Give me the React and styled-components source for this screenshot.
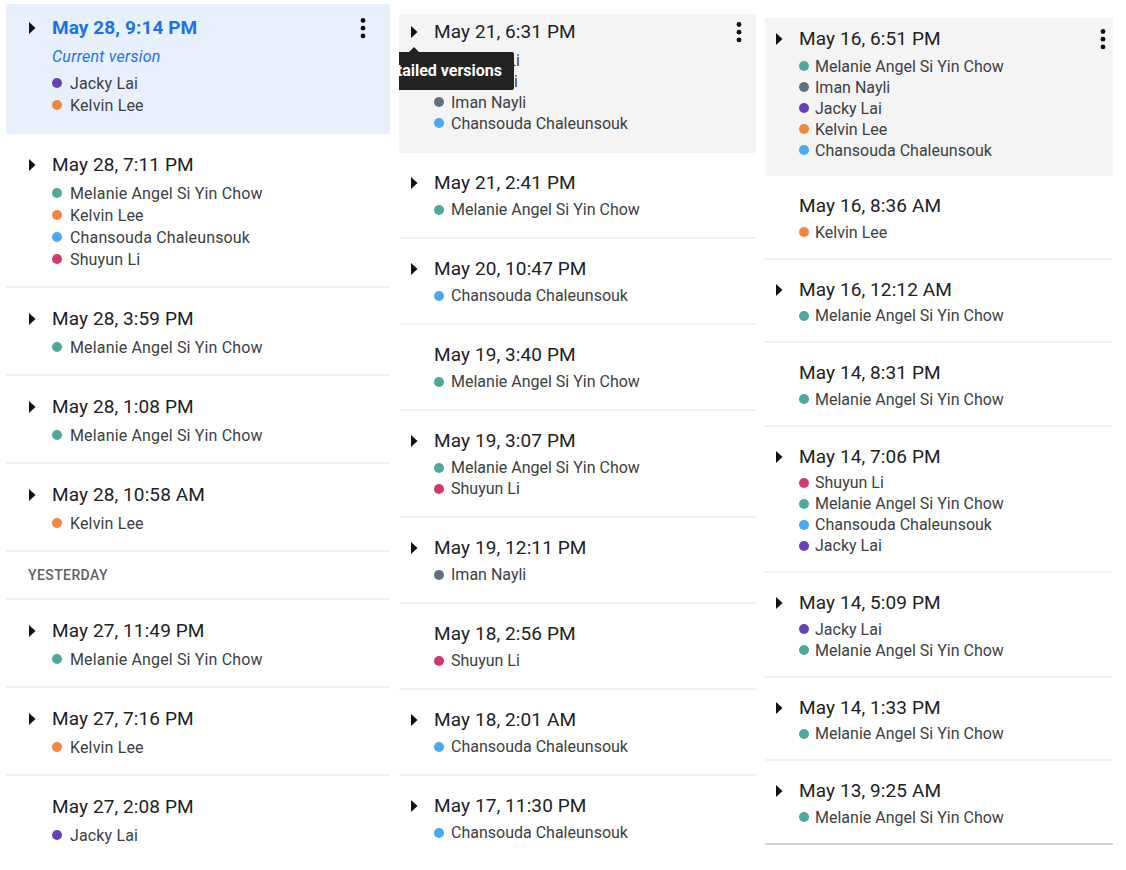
import React from "react";
import styled, { createGlobalStyle } from "styled-components";

const GlobalStyle = createGlobalStyle`
  html, body {
    margin: 0;
    padding: 0;
    background: #ffffff;
  }
  body {
    font-family: Roboto, "Liberation Sans", Arial, sans-serif;
    -webkit-font-smoothing: antialiased;
  }
`;

const COLORS = {
  teal: "#4fa89c",
  slate: "#5f7080",
  purple: "#6741b8",
  orange: "#ef873c",
  blue: "#4aa8f0",
  pink: "#d3386a",
};

const PEOPLE = {
  melanie: ["Melanie Angel Si Yin Chow", COLORS.teal],
  iman: ["Iman Nayli", COLORS.slate],
  jacky: ["Jacky Lai", COLORS.purple],
  kelvin: ["Kelvin Lee", COLORS.orange],
  chan: ["Chansouda Chaleunsouk", COLORS.blue],
  shuyun: ["Shuyun Li", COLORS.pink],
};

/* spacing differs a little from one column to the next */
const columns = [
  {
    top: 4,
    width: 384,
    padLeft: 14,
    padRight: 19,
    line: 22,
    tracking: 0.15,
    dotGap: 8,
    normal: { top: 19, gap: 5, bottom: 16 },
    selected: { top: 12, gap: 5, bottom: 16 },
    items: [
      { time: "May 28, 9:14 PM", people: ["jacky", "kelvin"], current: true, kind: "current" },
      { time: "May 28, 7:11 PM", people: ["melanie", "kelvin", "chan", "shuyun"] },
      { time: "May 28, 3:59 PM", people: ["melanie"] },
      { time: "May 28, 1:08 PM", people: ["melanie"] },
      { time: "May 28, 10:58 AM", people: ["kelvin"] },
      { header: "Yesterday" },
      { time: "May 27, 11:49 PM", people: ["melanie"] },
      { time: "May 27, 7:16 PM", people: ["kelvin"] },
      { time: "May 27, 2:08 PM", people: ["jacky"], flat: true, noLine: true },
    ],
  },
  {
    top: 14,
    width: 357,
    padLeft: 3,
    padRight: 9,
    line: 21,
    tracking: 0,
    dotGap: 7,
    normal: { top: 18, gap: 4, bottom: 17 },
    selected: { top: 6, gap: 5.5, bottom: 17.5 },
    items: [
      { time: "May 21, 6:31 PM", people: ["shuyun", "jacky", "iman", "chan"], kind: "hover", tooltip: true },
      { time: "May 21, 2:41 PM", people: ["melanie"] },
      { time: "May 20, 10:47 PM", people: ["chan"] },
      { time: "May 19, 3:40 PM", people: ["melanie"], flat: true },
      { time: "May 19, 3:07 PM", people: ["melanie", "shuyun"] },
      { time: "May 19, 12:11 PM", people: ["iman"] },
      { time: "May 18, 2:56 PM", people: ["shuyun"], flat: true },
      { time: "May 18, 2:01 AM", people: ["chan"] },
      { time: "May 17, 11:30 PM", people: ["chan"], noLine: true },
    ],
  },
  {
    top: 18,
    width: 348,
    padLeft: 2,
    padRight: 2,
    line: 21,
    tracking: 0,
    dotGap: 6,
    normal: { top: 18, gap: 3.5, bottom: 15 },
    selected: { top: 9, gap: 4.5, bottom: 13.5 },
    items: [
      { time: "May 16, 6:51 PM", people: ["melanie", "iman", "jacky", "kelvin", "chan"], kind: "hover" },
      { time: "May 16, 8:36 AM", people: ["kelvin"], flat: true },
      { time: "May 16, 12:12 AM", people: ["melanie"] },
      { time: "May 14, 8:31 PM", people: ["melanie"], flat: true },
      { time: "May 14, 7:06 PM", people: ["shuyun", "melanie", "chan", "jacky"] },
      { time: "May 14, 5:09 PM", people: ["jacky", "melanie"] },
      { time: "May 14, 1:33 PM", people: ["melanie"] },
      { time: "May 13, 9:25 AM", people: ["melanie"], endLine: true },
    ],
  },
];

const Page = styled.div`
  display: flex;
  align-items: flex-start;
  gap: 8px;
  padding-left: 6px;
`;

const Column = styled.section`
  width: ${(p) => p.$width}px;
  margin-top: ${(p) => p.$top}px;
  margin-right: 1px;
  overflow: hidden;
  flex-shrink: 0;
`;

const ROW_BG = {
  current: "#e8f0fe",
  hover: "#f4f4f4",
};

const Row = styled.div`
  padding: ${(p) => p.$pad.top}px ${(p) => p.$padRight}px
    ${(p) => p.$pad.bottom}px ${(p) => p.$padLeft}px;
  background: ${(p) => (p.$kind ? ROW_BG[p.$kind] : "transparent")};
  border-bottom: 2px solid
    ${(p) =>
      p.$endLine ? "#d3d3d3" : p.$noLine ? "transparent" : p.$kind ? ROW_BG[p.$kind] : "#f1f1f1"};
`;

const Head = styled.div`
  display: flex;
  align-items: center;
  height: 24px;
`;

const Toggle = styled.span`
  position: relative;
  display: flex;
  align-items: center;
  justify-content: center;
  width: 24px;
  height: 24px;
  margin-right: 8px;
  flex-shrink: 0;
`;

const Title = styled.span`
  font-size: 19px;
  line-height: 24px;
  letter-spacing: 0.1px;
  color: ${(p) => (p.$current ? "#1a73e8" : "#202124")};
  font-weight: ${(p) => (p.$current ? 700 : 400)};
  white-space: nowrap;
`;

const Kebab = styled.span`
  margin-left: auto;
  display: flex;
  width: 16px;
  height: 24px;
  align-items: center;
  justify-content: center;
`;

const Body = styled.div`
  padding-left: 32px;
`;

const Current = styled.div`
  margin-top: 7px;
  font-size: 16px;
  line-height: 20px;
  letter-spacing: 0.25px;
  font-style: italic;
  color: #1a73e8;
`;

const Names = styled.ul`
  list-style: none;
  margin: ${(p) => p.$gap}px 0 0;
  padding: 0;
`;

const Name = styled.li`
  display: flex;
  align-items: center;
  height: ${(p) => p.$line}px;
  font-size: 16px;
  letter-spacing: ${(p) => p.$tracking}px;
  color: #3c4043;
  white-space: nowrap;
`;

const Dot = styled.span`
  width: 10px;
  height: 10px;
  border-radius: 50%;
  margin: 0 ${(p) => p.$gap}px 0 0;
  background: ${(p) => p.$color};
  flex-shrink: 0;
`;

const Header = styled.div`
  height: 46px;
  display: flex;
  align-items: center;
  padding-left: 22px;
  font-size: 14px;
  font-weight: 500;
  letter-spacing: 0.4px;
  text-transform: uppercase;
  color: #5f6368;
  border-bottom: 2px solid #f1f1f1;
`;

const Tooltip = styled.span`
  position: absolute;
  top: 32px;
  right: -88px;
  padding: 9px 12px 9px 14px;
  background: #232323;
  color: #ffffff;
  font-size: 16px;
  font-weight: 700;
  line-height: 20px;
  border-radius: 2px;
  white-space: nowrap;
  z-index: 2;

  &::before {
    content: "";
    position: absolute;
    top: -5px;
    right: 95px;
    border-left: 5px solid transparent;
    border-right: 5px solid transparent;
    border-bottom: 5px solid #232323;
  }
`;

const Caret = () => (
  <svg width="8" height="14" viewBox="0 0 8 14">
    <polygon points="1,1 7.5,7 1,13" fill="#111" />
  </svg>
);

const MoreIcon = () => (
  <svg width="6" height="22" viewBox="0 0 6 22">
    <circle cx="3" cy="3.5" r="2.4" fill="#111" />
    <circle cx="3" cy="11.2" r="2.4" fill="#111" />
    <circle cx="3" cy="18.9" r="2.4" fill="#111" />
  </svg>
);

const Version = ({ item, col }) => {
  const pad = item.kind ? col.selected : col.normal;
  return (
    <Row
      $pad={pad}
      $padLeft={col.padLeft}
      $padRight={col.padRight}
      $kind={item.kind}
      $noLine={item.noLine}
      $endLine={item.endLine}
    >
      <Head>
        <Toggle>
          {!item.flat && <Caret />}
          {item.tooltip && <Tooltip>Show detailed versions</Tooltip>}
        </Toggle>
        <Title $current={item.current}>{item.time}</Title>
        {item.kind && (
          <Kebab>
            <MoreIcon />
          </Kebab>
        )}
      </Head>
      <Body>
        {item.current && <Current>Current version</Current>}
        <Names $gap={pad.gap}>
          {item.people.map((key) => {
            const [name, color] = PEOPLE[key];
            return (
              <Name key={key} $line={col.line} $tracking={col.tracking}>
                <Dot $color={color} $gap={col.dotGap} />
                {name}
              </Name>
            );
          })}
        </Names>
      </Body>
    </Row>
  );
};

const App = () => (
  <>
    <GlobalStyle />
    <Page>
      {columns.map((col, i) => (
        <Column key={i} $width={col.width} $top={col.top}>
          {col.items.map((item, j) =>
            item.header ? (
              <Header key={j}>{item.header}</Header>
            ) : (
              <Version key={j} item={item} col={col} />
            )
          )}
        </Column>
      ))}
    </Page>
  </>
);

export default App;
